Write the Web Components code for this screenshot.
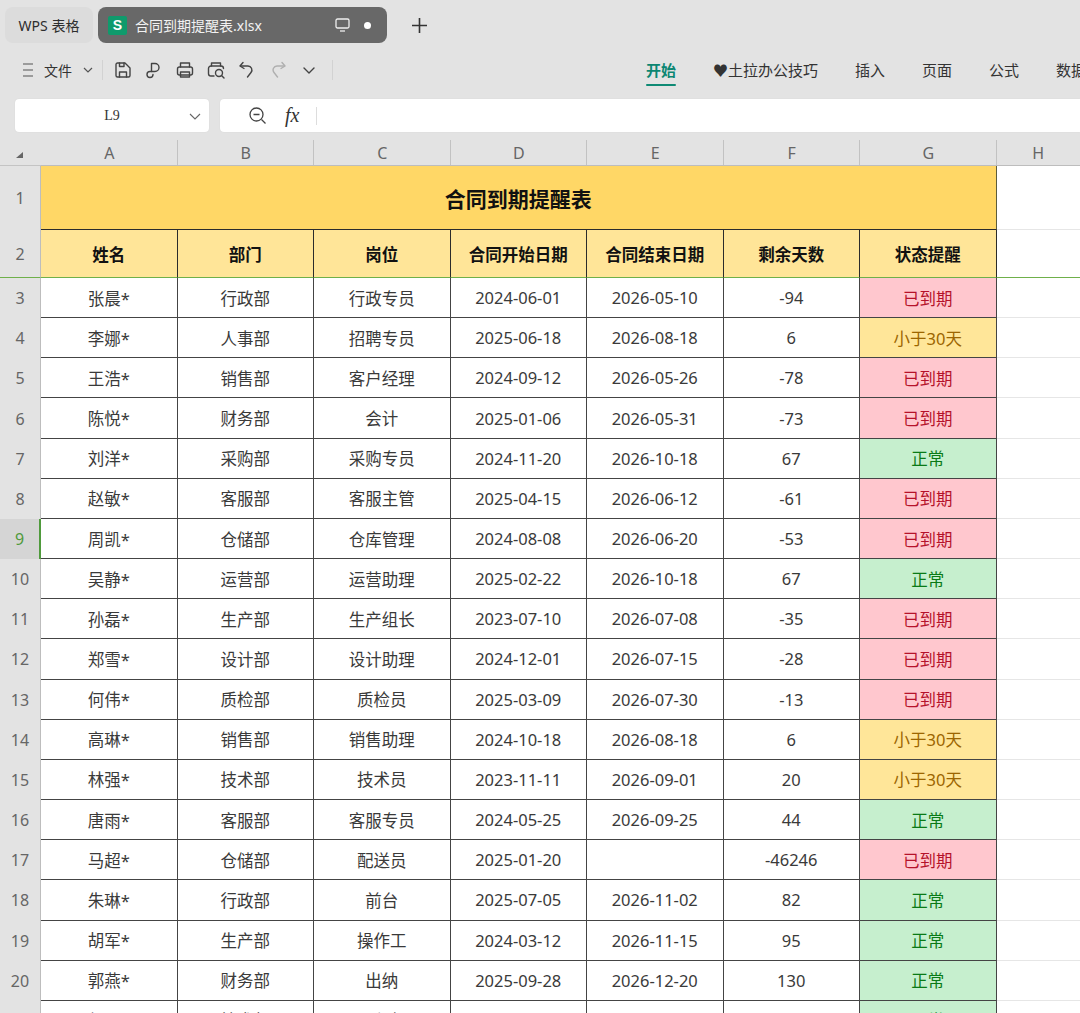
<!DOCTYPE html>
<html lang="zh">
<head>
<meta charset="utf-8">
<title>合同到期提醒表</title>
<style>
html, body { margin: 0; height: 100%; overflow: hidden; background: #fff; }
body { font-family: "Noto Sans", "Noto Sans CJK SC", sans-serif; color: #333; }
</style>
</head>
<body>
<wps-app>
  <wps-tabbar filename="合同到期提醒表.xlsx"></wps-tabbar>
  <wps-toolbar></wps-toolbar>
  <wps-formula cell="L9"></wps-formula>
  <wps-sheet></wps-sheet>
</wps-app>

<script>
// app shell
class WpsApp extends HTMLElement {
  constructor() {
    super();
    this.attachShadow({mode: 'open'}).innerHTML = `
    <style>
      :host { display: flex; flex-direction: column; width: 1080px; height: 1013px; overflow: hidden; background: #e3e3e3; }
    </style>
    <slot></slot>`;
  }
}

// top tabs
class WpsTabbar extends HTMLElement {
  connectedCallback() {
    const name = this.getAttribute('filename');
    this.attachShadow({mode: 'open'}).innerHTML = `
    <style>
      :host { display: flex; align-items: center; height: 36px; padding: 7px 0 0 5px; gap: 5px; }
      .home { width: 88px; height: 36px; border-radius: 8px; background: #dcdcdc; display: flex; align-items: center; justify-content: center; font-size: 14px; color: #2d2d2d; }
      .doc { width: 289px; height: 36px; border-radius: 8px; background: #686868; display: flex; align-items: center; color: #f2f2f2; font-size: 14px; box-sizing: border-box; padding-left: 10px; }
      .logo { width: 19px; height: 19px; border-radius: 2px; background: #0f9a6c; color: #fff; font: bold 14px/18px "Liberation Sans", sans-serif; text-align: center; margin-right: 8px; }
      .name { flex: 1; }
      .doc svg { margin-right: 14px; }
      .dot { width: 7px; height: 7px; border-radius: 50%; background: #fff; margin-right: 16px; }
      .plus { margin-left: 19px; }
    </style>
    <div class="home">WPS 表格</div>
    <div class="doc">
      <div class="logo">S</div>
      <div class="name">${name}</div>
      <svg width="15" height="14" viewBox="0 0 15 14" fill="none" stroke="#eee" stroke-width="1.3"><rect x="1" y="1" width="13" height="9" rx="1.5"/><path d="M5 13h5"/></svg>
      <div class="dot"></div>
    </div>
    <svg class="plus" width="17" height="17" viewBox="0 0 17 17" stroke="#333" stroke-width="1.6"><path d="M8.5 1v15M1 8.5h15"/></svg>`;
  }
}

// quick access + ribbon tabs
class WpsToolbar extends HTMLElement {
  connectedCallback() {
    const ic = (d, w, extra) => `<svg width="${w || 20}" height="20" viewBox="0 0 20 20" fill="none" stroke="#444" stroke-width="1.4" stroke-linecap="round" stroke-linejoin="round" ${extra || ''}>${d}</svg>`;
    this.attachShadow({mode: 'open'}).innerHTML = `
    <style>
      :host { display: flex; align-items: center; height: 53px; position: relative; font-size: 14px; color: #333; box-sizing: border-box; }
      .left { display: flex; align-items: center; padding-left: 23px; flex: 0 0 623px; box-sizing: border-box; height: 100%; }
      .file { margin: 0 0 0 10px; }
      .sep { width: 1px; height: 20px; background: #d2d2d2; }
      .icons { display: flex; align-items: center; gap: 11px; margin: 0 0 0 10px; }
      .tabs { display: flex; gap: 37px; margin-left: 23px; white-space: nowrap; font-size: 15px; }
      .tab { position: relative; }
      .tab.on { color: #0c8672; font-weight: 700; }
      .tab.on::after { content: ""; position: absolute; left: 0; right: 0; bottom: -6px; height: 2.5px; border-radius: 2px; background: #0f8a75; }
    </style>
    <div class="left">
      <svg width="11" height="14" viewBox="0 0 11 14" stroke="#555" stroke-width="1.2"><path d="M0 1h10M0 7h10M0 13h10"/></svg>
      <span class="file">文件</span>
      <svg width="10" height="6" viewBox="0 0 10 6" fill="none" stroke="#555" stroke-width="1.2" style="margin:0 9px 0 11px"><path d="M1 1l4 4 4-4"/></svg>
      <div class="sep"></div>
      <div class="icons">
        ${ic('<path d="M3 4.5A1.5 1.5 0 0 1 4.5 3H12l5 5v7.5a1.5 1.5 0 0 1-1.500 1.500h-11A1.500 1.500 0 0 1 3 15.500z"/><path d="M6.500 3v3.500h4.500V3M6.500 17v-5h7v5"/>')}
        ${ic('<path d="M7.500 11V3.500H11a4 4 0 0 1 0 8H7.500"/><path d="M7.500 11.500H6a3 3 0 1 0 3 3"/>')}
        ${ic('<path d="M5.500 7V3h9v4"/><rect x="2.500" y="7" width="15" height="8" rx="2"/><path d="M5.500 12h9v5h-9z"/>')}
        ${ic('<path d="M5.500 6V3h9v3"/><path d="M8 16H5a2.500 2.500 0 0 1-2.500-2.500v-5A2.500 2.500 0 0 1 5 6h10a2.500 2.500 0 0 1 2.500 2.500"/><circle cx="13" cy="13" r="3.500"/><path d="M15.500 15.500l2.500 2.500"/>')}
        ${ic('<path d="M6 2.500L3 6l4 2.500"/><path d="M3.500 6H11a4 4 0 0 1 3 6.500L10.500 17"/>')}
        ${ic('<path d="M14 2.500L17 6l-4 2.500"/><path d="M16.500 6H9a4 4 0 0 0-3 6.500L9.500 17"/>', 20, 'style="opacity:.32"')}
        ${ic('<path d="M5 8l5 5 5-5"/>')}
      </div>
      <div class="sep" style="margin-left:13px"></div>
    </div>
    <div class="tabs">
      <div class="tab on">开始</div>
      <div class="tab">♥土拉办公技巧</div>
      <div class="tab">插入</div>
      <div class="tab">页面</div>
      <div class="tab">公式</div>
      <div class="tab">数据</div>
    </div>`;
  }
}

// name box and fx
class WpsFormula extends HTMLElement {
  connectedCallback() {
    this.attachShadow({mode: 'open'}).innerHTML = `
    <style>
      :host { display: flex; height: 34px; margin: 3px 0 0 15px; gap: 11px; flex: none; }
      .box { background: #fff; border-radius: 4px; box-shadow: 0 0 1px #ccc; height: 33px; display: flex; align-items: center; }
      .name { width: 194px; position: relative; justify-content: center; font: 14px "Liberation Serif", serif; color: #333; padding-right: 0; }
      .name svg { position: absolute; right: 8px; top: 14px; }
      .bar { flex: 1; border-radius: 4px 0 0 4px; padding-left: 28px; }
      .fx { font: italic 20px "Liberation Serif", serif; color: #333; margin: 0 17px 0 18px; }
      .sep { width: 1px; height: 18px; background: #ddd; }
    </style>
    <div class="box name">${this.getAttribute('cell')}
      <svg width="12" height="7" viewBox="0 0 12 7" fill="none" stroke="#666" stroke-width="1.1"><path d="M1 1l5 5 5-5"/></svg>
    </div>
    <div class="box bar">
      <svg width="19" height="19" viewBox="0 0 19 19" fill="none" stroke="#444" stroke-width="1.3"><circle cx="8.500" cy="8.500" r="6.500"/><path d="M5.500 8.500h6M13.500 13.500l4 4"/></svg>
      <span class="fx">fx</span>
      <div class="sep"></div>
    </div>`;
  }
}

const ROWS = `张晨*,行政部,行政专员,2024-06-01,2026-05-10,-94,r
李娜*,人事部,招聘专员,2025-06-18,2026-08-18,6,y
王浩*,销售部,客户经理,2024-09-12,2026-05-26,-78,r
陈悦*,财务部,会计,2025-01-06,2026-05-31,-73,r
刘洋*,采购部,采购专员,2024-11-20,2026-10-18,67,g
赵敏*,客服部,客服主管,2025-04-15,2026-06-12,-61,r
周凯*,仓储部,仓库管理,2024-08-08,2026-06-20,-53,r
吴静*,运营部,运营助理,2025-02-22,2026-10-18,67,g
孙磊*,生产部,生产组长,2023-07-10,2026-07-08,-35,r
郑雪*,设计部,设计助理,2024-12-01,2026-07-15,-28,r
何伟*,质检部,质检员,2025-03-09,2026-07-30,-13,r
高琳*,销售部,销售助理,2024-10-18,2026-08-18,6,y
林强*,技术部,技术员,2023-11-11,2026-09-01,20,y
唐雨*,客服部,客服专员,2024-05-25,2026-09-25,44,g
马超*,仓储部,配送员,2025-01-20,,-46246,r
朱琳*,行政部,前台,2025-07-05,2026-11-02,82,g
胡军*,生产部,操作工,2024-03-12,2026-11-15,95,g
郭燕*,财务部,出纳,2025-09-28,2026-12-20,130,g
何强*,技术部,工程师,2024-08-20,2027-01-10,151,g`.split('\n').map(l => l.split(','));

const STATUS = {r: '已到期', y: '小于30天', g: '正常'};

// the grid
class WpsSheet extends HTMLElement {
  connectedCallback() {
    const cols = ['A', 'B', 'C', 'D', 'E', 'F', 'G', 'H'];
    const heads = ['姓名', '部门', '岗位', '合同开始日期', '合同结束日期', '剩余天数', '状态提醒'];
    let html = `<div class="corner"><i></i></div>`;
    cols.forEach((c, i) => html += `<div class="ch ${i == 7 ? 'last' : ''}">${c}</div>`);
    html += `<div class="rh">1</div><div class="title">合同到期提醒表</div><div class="blank b1"></div>`;
    html += `<div class="rh r2">2</div>`;
    heads.forEach(h => html += `<div class="head">${h}</div>`);
    html += `<div class="blank b2"></div>`;
    ROWS.forEach((r, i) => {
      const n = i + 3;
      html += `<div class="rh ${n == 9 ? 'cur' : ''}">${n}</div>`;
      for (let k = 0; k < 6; k++) html += `<div class="c">${r[k]}</div>`;
      html += `<div class="c s ${r[6]}">${STATUS[r[6]]}</div><div class="blank"></div>`;
    });
    this.attachShadow({mode: 'open'}).innerHTML = `
    <style>
      :host { display: block; flex: 1; overflow: hidden; margin-top: 7px; background: #fff; }
      .grid { display: grid; grid-template-columns: 41px repeat(7, 136.5px) 1fr; grid-template-rows: 26px 64px 48px repeat(19, 40.17px); font-size: 16.500px; color: #3a3a3a; }
      .grid > div { box-sizing: border-box; display: flex; align-items: center; justify-content: center; min-width: 0; }
      .corner { background: #e3e3e3; border-bottom: 1px solid #c4c4c4; position: relative; }
      .corner i { position: absolute; left: 16px; bottom: 7px; border-style: solid; border-width: 0 0 6px 7px; border-color: transparent transparent #666; }
      .ch { background: #e3e3e3; color: #666; font-size: 16px; border-bottom: 1px solid #bdbdbd; box-shadow: inset 1px -1px 0 #e3e3e3; position: relative; }
      .ch::after { content: ""; position: absolute; right: 0; top: 0; bottom: 0; width: 1px; background: #c2c2c2; }
      .ch.last::after { display: none; }
      .rh { background: #e3e3e3; color: #666; font-size: 16px; border-right: 1px solid #bdbdbd; }
      .rh.r2 { border-bottom: 1px solid #6fb04a; }
      .rh.cur { background: #d5d5d5; color: #4f9a3c; border-right: 2px solid #4f9a3c; }
      .title { grid-column: 2 / span 7; background: #ffd766; color: #111; font-weight: 700; font-size: 21px; border-bottom: 1px solid #2b2b2b; border-right: 1px solid #5c5c3c; }
      .blank { border-bottom: 1px solid #e6e6e6; background: #fff; }
      .blank.b2 { border-bottom: 1px solid #6fb04a; }
      .head { background: #ffe598; color: #111; font-weight: 700; font-size: 16.500px; border-right: 1px solid #2b2b2b; border-bottom: 1px solid #6fb04a; }
      .c { background: #fff; border-right: 1px solid #444; border-bottom: 1px solid #444; white-space: nowrap; }
      .s.r { background: #ffc7ce; color: #b5122a; }
      .s.y { background: #ffe699; color: #9c6500; }
      .s.g { background: #c6efce; color: #0a7a16; }
    </style>
    <div class="grid">${html}</div>`;
  }
}

customElements.define('wps-app', WpsApp);
customElements.define('wps-tabbar', WpsTabbar);
customElements.define('wps-toolbar', WpsToolbar);
customElements.define('wps-formula', WpsFormula);
customElements.define('wps-sheet', WpsSheet);
</script>
</body>
</html>
